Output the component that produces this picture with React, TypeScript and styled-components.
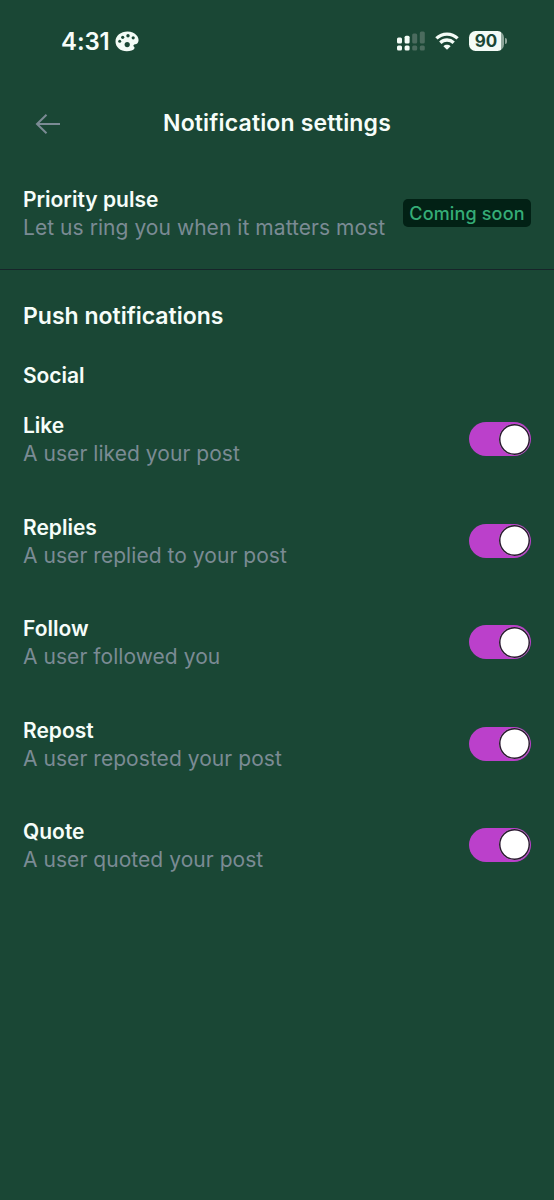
import React, { useState } from 'react';
import styled, { createGlobalStyle } from 'styled-components';

const GlobalStyle = createGlobalStyle`
  * { box-sizing: border-box; }
  body {
    margin: 0;
    background: #1a4735;
    font-family: Inter, 'Liberation Sans', sans-serif;
    color: #f6fdf9;
  }
`;

const Screen = styled.main`
  min-height: 1200px;
  background: #1a4735;
  overflow: hidden;
`;

const StatusBar = styled.div`
  height: 82px;
  padding: 0 50px 0 61px;
  display: flex;
  align-items: center;
  justify-content: space-between;
`;

const Clock = styled.div`
  display: flex;
  align-items: center;
  gap: 5px;
  font-size: 24px;
  font-weight: 600;
  letter-spacing: -0.1px;
`;

const Indicators = styled.div`
  display: flex;
  align-items: center;
`;

const Battery = styled.div`
  position: relative;
  width: 35px;
  height: 20px;
  margin-left: 10px;
  padding-right: 1px;
  border-radius: 6.5px;
  background: linear-gradient(90deg, #f3fbf6 32px, #8fa79b 32px);
  color: #1a4735;
  font-size: 17px;
  font-weight: 700;
  line-height: 20px;
  text-align: center;

  &::after {
    content: '';
    position: absolute;
    left: 36px;
    top: 7px;
    width: 2px;
    height: 6px;
    border-radius: 0 2px 2px 0;
    background: #8fa79b;
  }
`;

const Header = styled.header`
  height: 82px;
  padding: 0 35px;
  display: grid;
  grid-template-columns: 26px 1fr 26px;
  align-items: center;
`;

const BackButton = styled.button`
  display: flex;
  padding: 1px 0 0;
  border: 0;
  background: none;
  color: #7b8b94;
`;

const Title = styled.h1`
  margin: 0;
  font-size: 23px;
  line-height: 30px;
  font-weight: 600;
  letter-spacing: 0.17px;
  text-align: center;
  white-space: nowrap;
`;

const Row = styled.div`
  height: 56px;
  display: flex;
  align-items: center;
  justify-content: space-between;
`;

const Copy = styled.div`
  padding-top: 1px;
`;

const SettingCopy = styled(Copy)`
  padding-top: 2px;
`;

const PrioritySection = styled.section`
  padding: 21px 23px 28px;
  border-bottom: 1px solid #17252a;
`;

const PushSection = styled.section`
  padding: 31px 23px 0;
`;

const Name = styled.div`
  font-size: 21px;
  line-height: 28px;
  font-weight: 600;
  white-space: nowrap;
`;

const Description = styled.div`
  font-size: 21px;
  line-height: 28px;
  letter-spacing: 0.05px;
  color: #7b8b94;
  white-space: nowrap;
`;

const Badge = styled.span`
  width: 128px;
  height: 28px;
  border-radius: 5px;
  background: #022115;
  color: #35ad77;
  font-size: 18px;
  line-height: 29px;
  font-weight: 550;
  letter-spacing: 0.15px;
  text-align: center;
  white-space: nowrap;
`;

const SectionTitle = styled.h2`
  margin: 0;
  font-size: 23px;
  line-height: 30px;
  font-weight: 600;
`;

const GroupTitle = styled.h3`
  margin: 30px 0 20.4px;
  font-size: 21px;
  line-height: 30px;
  font-weight: 600;
  letter-spacing: -0.05px;
`;

const SettingList = styled.div`
  display: flex;
  flex-direction: column;
  gap: 45.4px;
`;

const Switch = styled.button<{ $on: boolean }>`
  width: 62px;
  height: 34px;
  padding: 1px;
  border: 0;
  border-radius: 17px;
  display: flex;
  align-items: center;
  justify-content: ${(p) => (p.$on ? 'flex-end' : 'flex-start')};
  background: ${(p) => (p.$on ? '#bb40cb' : '#4d665c')};
`;

const Thumb = styled.span`
  width: 31px;
  height: 31px;
  border-radius: 50%;
  background: #fff;
  box-shadow: inset 0 0 0 1.5px #2a1830;
`;

const PaletteIcon = () => (
  <svg width="24" height="21" viewBox="0 0 24 21">
    <path
      d="M12.5.5C5.8.5.5 4.700.5 10.400c0 5.600 5 9.800 11.300 9.800 3.600 0 6.700-1 7.600-2.700.8-1.600-1.500-2-.9-3.300.6-1.200 2.700-.4 4-1.900 1.700-2 1.300-5.200-.8-7.700C19.600 1.900 16.300.5 12.500.5Z"
      fill="#f3fbf6"
    />
    <g fill="#1a4735">
      <circle cx="4.700" cy="10.300" r="1.500" />
      <circle cx="7.700" cy="6.300" r="1.600" />
      <circle cx="13" cy="4.700" r="1.700" />
      <circle cx="18.200" cy="6.800" r="1.600" />
      <circle cx="12.200" cy="13.600" r="2.600" />
    </g>
  </svg>
);

const SignalIcon = () => (
  <svg width="28" height="20" viewBox="0 0 28 20">
    {[0, 7.600, 15.200, 22.800].map((x, i) => (
      <g key={x} fill={i < 2 ? '#f3fbf6' : '#4b6b5e'}>
        <rect x={x} y={[6.500, 4.800, 2.600, 0.400][i]} width="5" height={[6, 7.700, 9.900, 12.100][i]} rx="1.500" />
        <rect x={x} y="14.400" width="5" height="5" rx="1.500" />
      </g>
    ))}
  </svg>
);

const WifiIcon = styled.svg`
  margin-left: 10px;
`;

function Setting({ name, description }: { name: string; description: string }) {
  const [on, setOn] = useState(true);
  return (
    <Row>
      <SettingCopy>
        <Name>{name}</Name>
        <Description>{description}</Description>
      </SettingCopy>
      <Switch $on={on} role="switch" aria-checked={on} aria-label={name} onClick={() => setOn(!on)}>
        <Thumb />
      </Switch>
    </Row>
  );
}

const settings = [
  { name: 'Like', description: 'A user liked your post' },
  { name: 'Replies', description: 'A user replied to your post' },
  { name: 'Follow', description: 'A user followed you' },
  { name: 'Repost', description: 'A user reposted your post' },
  { name: 'Quote', description: 'A user quoted your post' },
];

export default function App() {
  return (
    <Screen>
      <GlobalStyle />
      <StatusBar>
        <Clock>
          4:31
          <PaletteIcon />
        </Clock>
        <Indicators>
          <SignalIcon />
          <WifiIcon width="24" height="18" viewBox="0 0 24 18">
            <g fill="none" stroke="#f3fbf6" strokeWidth="3.300">
              <path d="M1.400 6.400C7.300.7 16.700.7 22.600 6.400" />
              <path d="M5.300 10.700c3.800-3.600 9.600-3.600 13.400 0" />
            </g>
            <path d="M12 17.800 8.400 14.200c2-1.800 5.200-1.800 7.200 0Z" fill="#f3fbf6" />
          </WifiIcon>
          <Battery>90</Battery>
        </Indicators>
      </StatusBar>
      <Header>
        <BackButton aria-label="Back">
          <svg width="26" height="20" viewBox="0 0 26 20" fill="none" stroke="currentColor" strokeWidth="2">
            <path d="M25 10H2M11.500.8 2 10l9.500 9.200" />
          </svg>
        </BackButton>
        <Title>Notification settings</Title>
      </Header>
      <PrioritySection>
        <Row>
          <Copy>
            <Name>Priority pulse</Name>
            <Description>Let us ring you when it matters most</Description>
          </Copy>
          <Badge>Coming soon</Badge>
        </Row>
      </PrioritySection>
      <PushSection>
        <SectionTitle>Push notifications</SectionTitle>
        <GroupTitle>Social</GroupTitle>
        <SettingList>
          {settings.map((s) => (
            <Setting key={s.name} {...s} />
          ))}
        </SettingList>
      </PushSection>
    </Screen>
  );
}
